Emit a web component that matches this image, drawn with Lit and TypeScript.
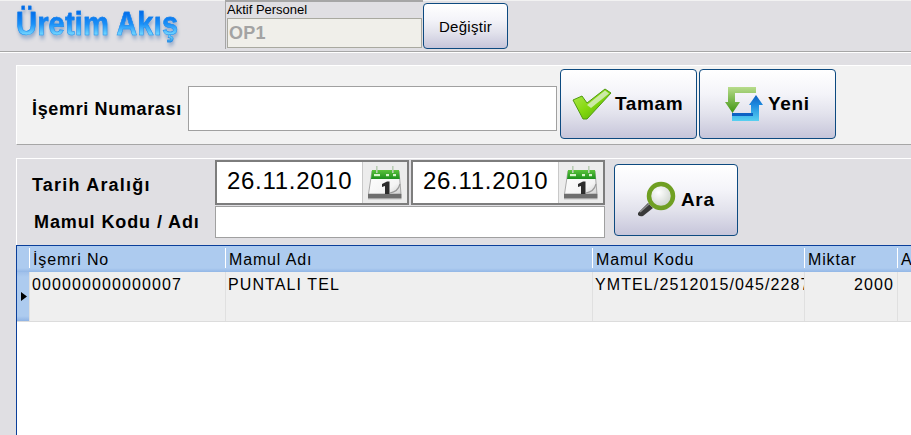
import { LitElement, html, css, svg } from "lit";
import { customElement } from "lit/decorators.js";

const calendar = (id: string) => svg`<svg width="38" height="36" viewBox="0 0 38 36">
  <defs>
    <linearGradient id="cg${id}" x1="0" y1="0" x2="0" y2="1"><stop offset="0" stop-color="#5cc43c"/><stop offset="1" stop-color="#1c8f1c"/></linearGradient>
    <linearGradient id="cp${id}" x1="0" y1="0" x2="1" y2="1"><stop offset="0" stop-color="#ffffff"/><stop offset=".7" stop-color="#f4f4f4"/><stop offset="1" stop-color="#cfcfcf"/></linearGradient>
  </defs>
  <path d="M2.5 29 L6 6 H33 L35 29 Z" fill="url(#cp${id})" stroke="#8a8a8a" stroke-width=".7"/>
  <path d="M6 5 H33 L33.8 14 H5 Z" fill="url(#cg${id})"/>
  <rect x="10" y="1" width="1.6" height="7" fill="#b9cdb4"/><rect x="26" y="1" width="1.6" height="7" fill="#b9cdb4"/>
  <rect x="8" y="9" width="6" height="2.2" fill="#d8f5cc"/><rect x="20" y="9" width="3" height="2.2" fill="#d8f5cc"/><rect x="27" y="9" width="3" height="2.2" fill="#d8f5cc"/>
  <path d="M16 19 L21 16.5 H23.5 V29 H19 V21 L16 22 Z" fill="#2c2c2c"/>
  <path d="M24 28 C30 27 33 23 34 19" fill="none" stroke="#9a9a9a" stroke-width="1.2"/>
  <path d="M2 29 H35.5 L35.5 33 H2 Z" fill="#6e6e6e"/>
  <rect x="2" y="33" width="33.5" height="1.3" fill="#a8a8a8"/>
</svg>`;

const checkIcon = svg`<svg width="40" height="32" viewBox="0 0 40 32">
  <defs><linearGradient id="ck" x1="0" y1="0" x2="1" y2="1"><stop offset="0" stop-color="#b6ea5a"/><stop offset=".5" stop-color="#84d80e"/><stop offset="1" stop-color="#4aa808"/></linearGradient></defs>
  <path d="M1 12 L10 8 L15 15 L33 1 L39 5 L15 31 L11 31 Z" fill="url(#ck)" stroke="#4f9a10" stroke-width="1"/>
  <path d="M15 17 L33 2.5 L37 5.5 L19 20 Z" fill="#d9ecc2" opacity=".85"/>
</svg>`;

const refreshIcon = svg`<svg width="38" height="34" viewBox="0 0 38 34">
  <defs>
    <linearGradient id="rg" x1="0" y1="0" x2="0" y2="1"><stop offset="0" stop-color="#b8dc8c"/><stop offset="1" stop-color="#3f9410"/></linearGradient>
    <linearGradient id="rb" x1="0" y1="1" x2="0" y2="0"><stop offset="0" stop-color="#58d0f0"/><stop offset=".6" stop-color="#1e8ce0"/><stop offset="1" stop-color="#0d5fc0"/></linearGradient>
  </defs>
  <path d="M3 0 H31 V6 H10 V15 H15 L7.5 26 L0 15 H3 Z" fill="url(#rg)"/>
  <path d="M7 26 H26 V18 H24 L31 8 L38 18 H34 V34 H7 Z" fill="url(#rb)"/>
  <rect x="7" y="26" width="21" height="3" fill="#0d62c4"/>
</svg>`;

const searchIcon = svg`<svg width="44" height="44" viewBox="0 0 44 44">
  <defs><radialGradient id="lens" cx=".4" cy=".35" r=".7"><stop offset="0" stop-color="#ffffff"/><stop offset="1" stop-color="#c8cfc8"/></radialGradient></defs>
  <path d="M2 35 L12 25 L17 30 L7 38 Q4 39 2 37 Z" fill="#3a3a3a"/>
  <path d="M4 34 L13 26" stroke="#8c8c8c" stroke-width="1.5"/>
  <circle cx="25" cy="18" r="12" fill="url(#lens)" stroke="#6f9f22" stroke-width="4.5"/>
</svg>`;

const arrow = svg`<svg width="6" height="9" viewBox="0 0 6 9"><path d="M0 0 L6 4.5 L0 9 Z" fill="#000"/></svg>`;

@customElement("app-root")
export class AppRoot extends LitElement {
  static styles = css`
    :host {
      display: block; width: 911px; height: 435px; overflow: hidden;
      background: #e0dfe3; font-family: "Liberation Sans", Arial, sans-serif; color: #000;
    }
    .top { display: flex; height: 50px; box-sizing: content-box; border-top: 1px solid #f2f2f2; border-bottom: 1px solid #a6a6a6; box-shadow: 0 1px 0 #fff; }
    .logo {
      width: 225px; box-sizing: border-box; padding: 4px 0 0 16px; font-size: 33px; line-height: 38px; font-weight: 700;
      letter-spacing: 0.2px;
      white-space: nowrap;
    }
    .logo span {
      display: inline-block; transform: scaleX(.88); transform-origin: left center;
      background: linear-gradient(#0068e8 15%, #1a90f8 50%, #7adcff 80%, #1e8ae0);
      -webkit-background-clip: text; background-clip: text; color: transparent;
      -webkit-text-stroke: .5px #1d86ea;
      filter: drop-shadow(1px 3px 2px #8fa6c8);
    }
    .person { width: 198px; box-sizing: border-box; border: 1px solid #a6a6a6; border-bottom: none; border-right: none; border-top: 2px solid #a6a6a6; margin-top: -1px; height: 49px; padding: 1px 1px 0 1px; font-size: 13px; }
    .person .cap { line-height: 14px; height: 15px; }
    .person .val { height: 30px; box-sizing: border-box; border: 1px solid #a9a9a0; background: #f0efea; color: #a3a3a3; font-weight: 700; font-size: 18px; line-height: 28px; padding-left: 1px; letter-spacing: .3px; }
    .btn {
      box-sizing: border-box; display: flex; align-items: center; border: 1px solid #0d4a80; border-radius: 4px; flex: none;
      background: linear-gradient(#ffffff 0%, #f4f4f9 35%, #e2e2ec 65%, #c6c5da 100%);
      font-weight: 700; font-size: 19px; letter-spacing: .65px;
    }
    .change { width: 85px; height: 46px; margin-top: 2px; font-weight: 400; font-size: 15px; letter-spacing: .3px; justify-content: center; }
    .p1 { margin: 13px 0 0 16px; height: 78px; background: #f2f2f2; border-top: 1px solid #fff; border-left: 1px solid #fff; border-bottom: 1px solid #a6a6a6; display: flex; }
    .label { font-weight: 700; font-size: 18px; white-space: nowrap; }
    .p1 .label { width: 156px; margin-left: 15px; margin-top: 33px; letter-spacing: .65px; }
    .field { box-sizing: border-box; background: #fff; border: 1px solid #a0a0a0; }
    .order { width: 369px; height: 45px; margin-top: 20px; }
    .big { width: 137px; height: 70px; margin-top: 3px; }
    .p1 .ok { margin-left: 3px; padding-left: 11px; gap: 3px; }
    .p1 .new { margin-left: 2px; padding-left: 25px; gap: 5px; }
    .p2 { margin: 13px 0 0 16px; height: 87px; border-top: 1px solid #fff; border-left: 1px solid #fff; padding-top: 1px; display: grid; grid-template-columns: 198px 196px 196px auto; grid-template-rows: 45px 33px; box-sizing: border-box; }
    .p2 .l1 { margin: 15px 0 0 15px; letter-spacing: 1.2px; }
    .p2 .l2 { margin: 7px 0 0 17px; letter-spacing: .9px; }
    .date { box-sizing: border-box; width: 194px; height: 45px; border: 2px solid #7d7d7d; background: #fff; display: flex; font-size: 24px; letter-spacing: .7px; line-height: 37px; padding-left: 10px; justify-content: space-between; }
    .cal { width: 44px; flex: none; height: 41px; border-left: 1px solid #c9c9c9; background: #ececec; display: flex; align-items: center; justify-content: center; }
    .name { grid-column: 2 / 4; width: 390px; height: 32px; margin-top: 1px; }
    .ara { grid-column: 4; grid-row: 1 / 3; width: 124px; height: 72px; margin: 4px 0 0 7px; padding-left: 21px; gap: 1px; }
    .grid { margin-left: 16px; height: 190px; background: #fff; border-left: 1px solid #0b3f9a; border-top: 1px solid #0b3f9a; font-size: 16px; overflow: hidden; }
    .hdr, .row { display: grid; grid-template-columns: 12px 196px 367px 212px 93px 1fr; }
    .hdr { height: 26px; background: linear-gradient(#adcbef 0 85%, #93b7e6 100%); }
    .hdr > div { white-space: nowrap; overflow: hidden; line-height: 28px; padding-left: 4px; box-sizing: border-box; letter-spacing: .85px; position: relative; }
    .hdr > div:not(:first-child)::before { content: ""; position: absolute; left: 0; top: 2px; bottom: 4px; width: 1px; background: #fff; }
    .row { height: 49px; background: #efefef; border-bottom: 1px solid #dcdcdc; box-sizing: content-box; }
    .row > div { white-space: nowrap; overflow: hidden; line-height: 26px; padding-left: 2px; border-left: 1px solid #e0e0e0; letter-spacing: 1.1px; box-sizing: border-box; }
    .row .rh { padding: 0 0 0 4px; border: none; background: linear-gradient(#9fbfea, #adcbef 10% 90%, #8fb3e4); display: flex; align-items: center; }
    .row .num { text-align: right; padding-right: 3px; }
  `;

  render() {
    return html`
      <div class="top">
        <div class="logo"><span>Üretim Akış</span></div>
        <div class="person"><div class="cap">Aktif Personel</div><div class="val">OP1</div></div>
        <div class="btn change">Değiştir</div>
      </div>
      <div class="p1">
        <div class="label">İşemri Numarası</div>
        <div class="field order"></div>
        <div class="btn big ok">${checkIcon}<span>Tamam</span></div>
        <div class="btn big new">${refreshIcon}<span>Yeni</span></div>
      </div>
      <div class="p2">
        <div class="label l1">Tarih Aralığı</div>
        <div class="date"><span>26.11.2010</span><div class="cal">${calendar("a")}</div></div>
        <div class="date"><span>26.11.2010</span><div class="cal">${calendar("b")}</div></div>
        <div class="btn ara">${searchIcon}<span>Ara</span></div>
        <div class="label l2">Mamul Kodu / Adı</div>
        <div class="field name"></div>
      </div>
      <div class="grid">
        <div class="hdr"><div></div><div>İşemri No</div><div>Mamul Adı</div><div>Mamul Kodu</div><div>Miktar</div><div>A</div></div>
        <div class="row">
          <div class="rh">${arrow}</div>
          <div>000000000000007</div><div>PUNTALI TEL</div><div>YMTEL/2512015/045/2287</div><div class="num">2000</div><div></div>
        </div>
      </div>
    `;
  }
}
